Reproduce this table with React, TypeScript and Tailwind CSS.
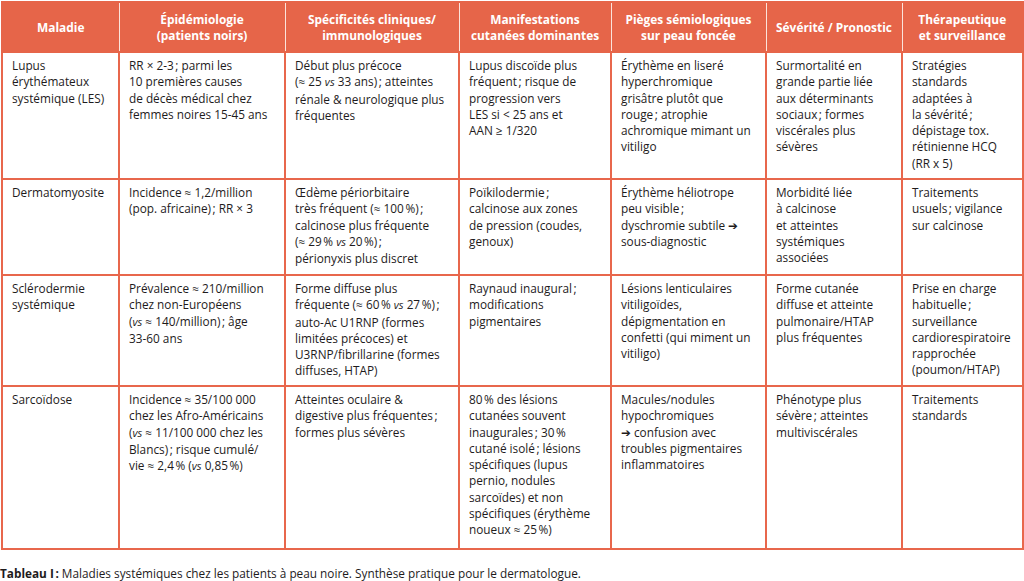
import React from "react";

const headers: string[][] = [
  ["Maladie"],
  ["Épidémiologie", "(patients noirs)"],
  ["Spécificités cliniques/", "immunologiques"],
  ["Manifestations", "cutanées dominantes"],
  ["Pièges sémiologiques", "sur peau foncée"],
  ["Sévérité / Pronostic"],
  ["Thérapeutique", "et surveillance"],
];

const N = "\u202F";

const rows: { h: string; cells: string[][] }[] = [
  {
    h: "h-[127px]",
    cells: [
      ["Lupus", "érythémateux", "systémique (LES)"],
      [`RR × 2-3${N}; parmi les`, "10 premières causes", "de décès médical chez", "femmes noires 15-45 ans"],
      ["Début plus précoce", `(≈ 25 vs 33 ans)${N}; atteintes`, "rénale & neurologique plus", "fréquentes"],
      ["Lupus discoïde plus", `fréquent${N}; risque de`, "progression vers", "LES si < 25 ans et", "AAN ≥ 1/320"],
      ["Érythème en liseré", "hyperchromique", "grisâtre plutôt que", `rouge${N}; atrophie`, "achromique mimant un", "vitiligo"],
      ["Surmortalité en", "grande partie liée", "aux déterminants", `sociaux${N}; formes`, "viscérales plus", "sévères"],
      ["Stratégies", "standards", "adaptées à", `la sévérité${N};`, "dépistage tox.", "rétinienne HCQ", "(RR x 5)"],
    ],
  },
  {
    h: "h-[96px]",
    cells: [
      ["Dermatomyosite"],
      ["Incidence ≈ 1,2/million", `(pop. africaine)${N}; RR × 3`],
      ["Œdème périorbitaire", `très fréquent (≈ 100${N}%)${N};`, "calcinose plus fréquente", `(≈ 29${N}% vs 20${N}%)${N};`, "périonyxis plus discret"],
      [`Poïkilodermie${N};`, "calcinose aux zones", "de pression (coudes,", "genoux)"],
      ["Érythème héliotrope", `peu visible${N};`, "dyschromie subtile ➔", "sous-diagnostic"],
      ["Morbidité liée", "à calcinose", "et atteintes", "systémiques", "associées"],
      ["Traitements", `usuels${N}; vigilance`, "sur calcinose"],
    ],
  },
  {
    h: "h-[111px]",
    cells: [
      ["Sclérodermie", "systémique"],
      ["Prévalence ≈ 210/million", "chez non-Européens", `(vs ≈ 140/million)${N}; âge`, "33-60 ans"],
      ["Forme diffuse plus", `fréquente (≈ 60${N}% vs 27${N}%)${N};`, "auto-Ac U1RNP (formes", "limitées précoces) et", "U3RNP/fibrillarine (formes", "diffuses, HTAP)"],
      [`Raynaud inaugural${N};`, "modifications", "pigmentaires"],
      ["Lésions lenticulaires", "vitiligoïdes,", "dépigmentation en", "confetti (qui miment un", "vitiligo)"],
      ["Forme cutanée", "diffuse et atteinte", "pulmonaire/HTAP", "plus fréquentes"],
      ["Prise en charge", `habituelle${N};`, "surveillance", "cardiorespiratoire", "rapprochée", "(poumon/HTAP)"],
    ],
  },
  {
    h: "h-[163px]",
    cells: [
      ["Sarcoïdose"],
      ["Incidence ≈ 35/100 000", "chez les Afro-Américains", "(vs ≈ 11/100 000 chez les", `Blancs)${N}; risque cumulé/`, `vie ≈ 2,4${N}% (vs 0,85${N}%)`],
      ["Atteintes oculaire &", `digestive plus fréquentes${N};`, "formes plus sévères"],
      [`80${N}% des lésions`, "cutanées souvent", `inaugurales${N}; 30${N}%`, `cutané isolé${N}; lésions`, "spécifiques (lupus", "pernio, nodules", "sarcoïdes) et non", "spécifiques (érythème", `noueux ≈ 25${N}%)`],
      ["Macules/nodules", "hypochromiques", "➔ confusion avec", "troubles pigmentaires", "inflammatoires"],
      ["Phénotype plus", `sévère${N}; atteintes`, "multiviscérales"],
      ["Traitements", "standards"],
    ],
  },
];

function renderLine(line: string) {
  const parts = line.split(/\b(vs)\b/);
  return parts.map((p, i) =>
    p === "vs" ? (
      <i key={i} className="text-[11px]">
        vs
      </i>
    ) : (
      <React.Fragment key={i}>{p}</React.Fragment>
    )
  );
}

export default function App() {
  return (
    <div
      className="w-[1024px] h-[581px] bg-white overflow-hidden text-[#1e1b1c]"
      style={{ fontFamily: '"Open Sans", "Liberation Sans", "DejaVu Sans", sans-serif' }}
    >
      <table className="table-fixed border-collapse w-[1021px] ml-px mt-px">
        <colgroup>
          <col className="w-[117px]" />
          <col className="w-[166px]" />
          <col className="w-[174px]" />
          <col className="w-[152px]" />
          <col className="w-[155px]" />
          <col className="w-[136px]" />
          <col className="w-[121px]" />
        </colgroup>
        <thead>
          <tr className="h-[50px] bg-[#e66549]">
            {headers.map((h, i) => (
              <th
                key={i}
                className={
                  "border-y-2 border-[#e66549] text-white font-bold text-[11.9px] leading-[16px] text-center align-middle px-1 whitespace-nowrap " +
                  (i === 0
                    ? "border-l-2 border-r-0"
                    : i === headers.length - 1
                    ? "border-l border-l-[#fbe3db] border-r-2"
                    : "border-l border-l-[#fbe3db] border-r-0")
                }
              >
                {h.map((l, j) => (
                  <div key={j}>{l}</div>
                ))}
              </th>
            ))}
          </tr>
        </thead>
        <tbody>
          {rows.map((r, ri) => (
            <tr key={ri} className={r.h}>
              {r.cells.map((c, ci) => (
                <td
                  key={ci}
                  className="border-2 border-[#e8674c] align-top pl-[9px] pr-1 pt-[4px] text-[11.8px] leading-[16.3px] whitespace-nowrap"
                >
                  {c.map((l, j) => (
                    <div key={j}>{renderLine(l)}</div>
                  ))}
                </td>
              ))}
            </tr>
          ))}
        </tbody>
      </table>
      <div className="mt-[15px] text-[11.8px] leading-[16px] whitespace-nowrap">
        <span className="font-bold">Tableau I{N}:</span> Maladies systémiques chez les patients à peau noire. Synthèse pratique pour le dermatologue.
      </div>
    </div>
  );
}
